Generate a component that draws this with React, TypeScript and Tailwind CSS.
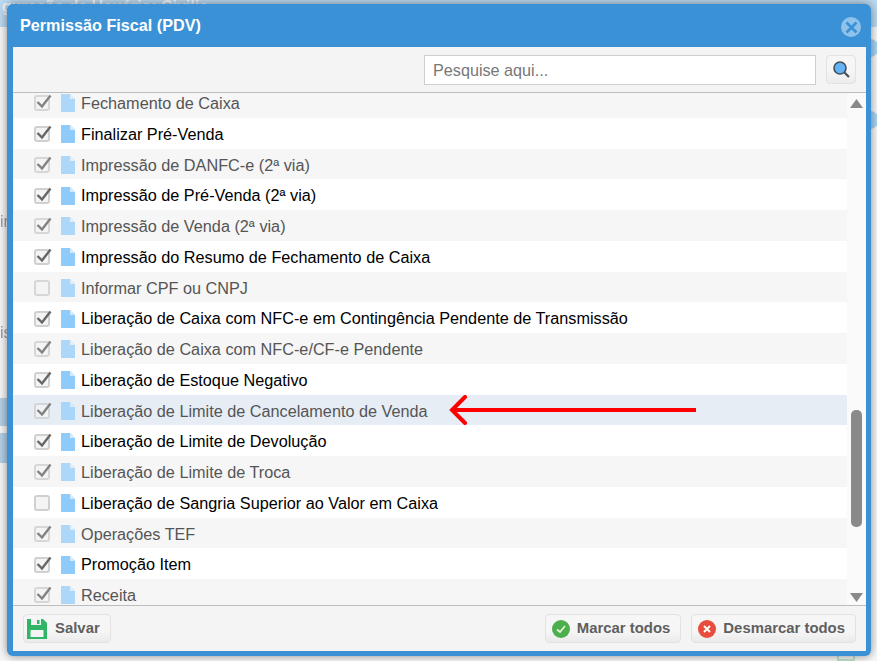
const rows = [
  { label: "Fechamento de Caixa", checked: true },
  { label: "Finalizar Pré-Venda", checked: true },
  { label: "Impressão de DANFC-e (2ª via)", checked: true },
  { label: "Impressão de Pré-Venda (2ª via)", checked: true },
  { label: "Impressão de Venda (2ª via)", checked: true },
  { label: "Impressão do Resumo de Fechamento de Caixa", checked: true },
  { label: "Informar CPF ou CNPJ", checked: false },
  { label: "Liberação de Caixa com NFC-e em Contingência Pendente de Transmissão", checked: true },
  { label: "Liberação de Caixa com NFC-e/CF-e Pendente", checked: true },
  { label: "Liberação de Estoque Negativo", checked: true },
  { label: "Liberação de Limite de Cancelamento de Venda", checked: true, marked: true },
  { label: "Liberação de Limite de Devolução", checked: true },
  { label: "Liberação de Limite de Troca", checked: true },
  { label: "Liberação de Sangria Superior ao Valor em Caixa", checked: false },
  { label: "Operações TEF", checked: true },
  { label: "Promoção Item", checked: true },
  { label: "Receita", checked: true },
];

const CheckBox = ({ checked, faded }: { checked: boolean; faded: boolean }) => (
  <span className={`relative block h-[16px] w-[16px] shrink-0 rounded-[3px] border-2 border-[#d0d0d0] bg-[#f4f4f4] ${faded ? "opacity-80" : ""}`}>
    {checked && (
      <svg className="absolute -left-[1px] -top-[4px]" width="18" height="18" viewBox="0 0 18 18">
        <path d="M2.5 9 L7 13.5 L15.5 2.5" fill="none" stroke="#666" strokeWidth="2.4" />
      </svg>
    )}
  </span>
);

const DocIcon = ({ faded }: { faded: boolean }) => (
  <svg className={`shrink-0 ${faded ? "opacity-70" : ""}`} width="14" height="18" viewBox="0 0 14 18">
    <path d="M0 0 H9 L14 5 V18 H0 Z" fill="#8ecbfb" />
    <path d="M9 0 L14 5 H9 Z" fill="#d4ebfd" />
  </svg>
);

const Row = ({ row, odd }: { row: (typeof rows)[number]; odd: boolean }) => {
  const bg = row.marked ? "bg-[#e6edf5]" : odd ? "bg-white" : "bg-[#f6f6f6]";
  return (
    <div className={`relative flex h-[30.75px] items-center pl-[21px] pt-[2px] ${bg}`}>
      <CheckBox checked={row.checked} faded={!odd} />
      <span className="ml-[11px]">
        <DocIcon faded={!odd} />
      </span>
      <span className={`ml-[6px] whitespace-nowrap text-[16.24px] ${odd ? "text-black" : "text-[#555]"}`}>
        {row.label}
      </span>
      {row.marked && (
        <svg className="absolute left-[436px] top-[0px]" width="250" height="30" viewBox="0 0 250 30">
          <path d="M2 15 H247" fill="none" stroke="#ff0000" strokeWidth="4" />
          <path d="M16 2 L3 15 L16 28" fill="none" stroke="#ff0000" strokeWidth="4" strokeLinecap="round" />
        </svg>
      )}
    </div>
  );
};

const FooterButton = ({ icon, label }: { icon: React.ReactNode; label: string }) => (
  <button className="flex h-[29px] items-center gap-[7px] rounded-[4px] border border-[#e2e2e2] bg-gradient-to-b from-[#f6f6f6] from-60% to-[#eaeaea] pl-[5px] pr-[10px] text-[14.9px] font-bold text-[#5f5f5f]">
    {icon}
    {label}
  </button>
);

export default function App() {
  return (
    <div className="relative h-[661px] w-[877px] overflow-hidden bg-[#f7f7f7] font-['Liberation_Sans',Arial,sans-serif]">
      {/* Page behind the dialog */}
      <div className="h-[27px] overflow-hidden bg-[#bcd9f0] pl-[2px] text-[16px] font-bold leading-[14px] text-white/80 blur-[0.6px]">
        guração de Usuário: Civilis
      </div>
      <div className="flex h-[628px] justify-between overflow-hidden blur-[0.6px]">
        <div className="w-[7px] overflow-hidden text-[16px] leading-[20px] text-[#9a9aa8]">
          <div className="mt-[185px]">ir</div>
          <div className="mt-[91px]">is</div>
          <div className="mt-[55px] h-[28px] bg-[#b5d0e6]" />
          <div className="mt-[7px] h-[30px] bg-[#b5d0e6]" />
        </div>
        <div className="w-[6px] overflow-hidden">
          <div className="ml-[-10px] mt-[12px] h-[18px] w-[18px] rounded-full bg-[#a9d4f5]" />
          <div className="ml-[-10px] mt-[54px] h-[18px] w-[18px] rounded-full bg-[#a9d4f5]" />
        </div>
      </div>
      <div className="flex h-[6px] overflow-hidden pl-[837px]">
        <div className="h-[6px] w-[18px] border-x-2 border-b-2 border-[#bfe3cb]" />
      </div>

      {/* Dialog */}
      <div className="absolute left-[7px] top-[4px] flex h-[652px] w-[864px] flex-col rounded-[6px] border-l-[6px] border-r-[5px] border-b-[5px] border-[#3a91d5] bg-[#3a91d5] shadow-[0_0_10px_rgba(0,0,0,0.45)]">
        <div className="relative flex h-[43px] shrink-0 items-center pl-[7px] text-[16.2px] font-bold text-white">
          Permissão Fiscal (PDV)
          <span className="absolute right-[5px] top-[13px] flex h-[20px] w-[20px] items-center justify-center rounded-full bg-[#8fc3ec]">
            <svg width="13" height="13" viewBox="0 0 13 13">
              <path d="M1.5 1.5 L11.5 11.5 M11.5 1.5 L1.5 11.5" stroke="#3a91d5" strokeWidth="2.8" />
            </svg>
          </span>
        </div>

        <div className="flex h-[46px] shrink-0 items-start justify-end border-b border-[#bdbdbd] bg-[#f4f4f4] pr-[10px] pt-[8px]">
          <input
            placeholder="Pesquise aqui..."
            className="h-[30px] w-[392px] border border-[#cfcfcf] bg-white px-[8px] text-[16.2px] placeholder:text-[#777]"
          />
          <button className="ml-[10px] flex h-[29px] w-[30px] items-center justify-center rounded-[4px] border border-[#e2e2e2] bg-gradient-to-b from-[#f6f6f6] from-50% to-[#ececec]">
            <svg width="17" height="17" viewBox="0 0 17 17">
              <circle cx="7" cy="7" r="6" fill="#63b3f5" stroke="#44505c" strokeWidth="1.6" />
              <path d="M11.5 11.5 L16 16" stroke="#44505c" strokeWidth="2.2" />
            </svg>
          </button>
        </div>

        <div className="flex min-h-0 flex-1">
          <div className="min-w-0 flex-1 overflow-hidden bg-white">
            <div className="-mt-[6px]">
              {rows.map((row, i) => (
                <Row key={row.label} row={row} odd={i % 2 === 1} />
              ))}
            </div>
          </div>
          <div className="flex w-[19px] shrink-0 flex-col items-center bg-[#fafafa]">
            <svg className="mt-[6px] shrink-0" width="13" height="9" viewBox="0 0 13 9">
              <path d="M6.5 0 L13 9 H0 Z" fill="#8a8a8a" />
            </svg>
            <div className="mt-[302px] h-[117px] w-[11px] shrink-0 rounded-[5px] bg-[#8a8a8a]" />
            <svg className="mt-auto mb-[3px] shrink-0" width="13" height="9" viewBox="0 0 13 9">
              <path d="M0 0 H13 L6.5 9 Z" fill="#8a8a8a" />
            </svg>
          </div>
        </div>

        <div className="flex h-[46px] shrink-0 items-start justify-between border-t border-[#bdbdbd] bg-[#f4f4f4] pl-[10px] pr-[10px] pt-[8px]">
          <FooterButton
            label="Salvar"
            icon={
              <svg className="-ml-[2px] mr-[1px]" width="20" height="20" viewBox="0 0 20 20">
                <path d="M0 0 H16 L20 4 V20 H0 Z" fill="#2fb565" />
                <rect x="4" y="0" width="10" height="6" fill="#f4f4f4" />
                <rect x="10" y="1" width="2.5" height="4" fill="#2fb565" />
                <rect x="3.5" y="11" width="13" height="7" fill="#f4f4f4" />
              </svg>
            }
          />
          <div className="flex gap-[10px]">
            <FooterButton
              label="Marcar todos"
              icon={
                <span className="ml-[1px] flex h-[18px] w-[18px] items-center justify-center rounded-full bg-[#4cae4c]">
                  <svg width="12" height="12" viewBox="0 0 12 12">
                    <path d="M2 6.5 L5 9 L10 3" fill="none" stroke="#e4f4d8" strokeWidth="1.8" />
                  </svg>
                </span>
              }
            />
            <FooterButton
              label="Desmarcar todos"
              icon={
                <span className="ml-[1px] flex h-[18px] w-[18px] items-center justify-center rounded-full bg-[#e74c3c]">
                  <svg width="10" height="10" viewBox="0 0 10 10">
                    <path d="M2 2 L8 8 M8 2 L2 8" stroke="white" strokeWidth="2" />
                  </svg>
                </span>
              }
            />
          </div>
        </div>
      </div>
    </div>
  );
}
